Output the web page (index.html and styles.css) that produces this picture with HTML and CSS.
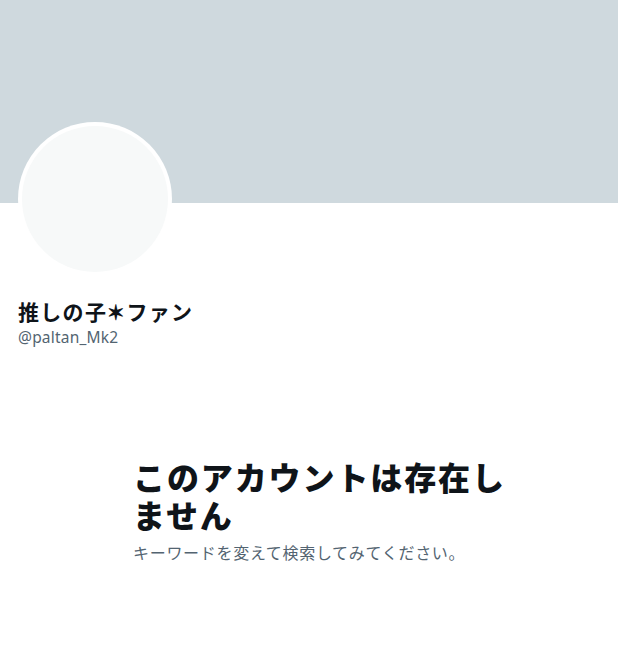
FILE: index.html
```html
<!DOCTYPE html>
<html lang="ja">
<head>
<meta charset="utf-8">
<link rel="stylesheet" href="styles.css">
</head>
<body>
<div class="page">
  <div class="banner"></div>
  <div class="profile">
    <div class="avatar"><div class="avatar-inner"></div></div>
    <div class="name">推しの子✶ファン</div>
    <div class="handle">@paltan_Mk2</div>
  </div>
  <div class="empty">
    <div class="empty-box">
      <div class="empty-title">このアカウントは存在しません</div>
      <div class="empty-sub">キーワードを変えて検索してみてください。</div>
    </div>
  </div>
</div>
</body>
</html>
```

FILE: styles.css
```css
html, body {
  margin: 0;
  padding: 0;
  background: #ffffff;
}
body {
  font-family: "Noto Sans", "Noto Sans CJK JP", sans-serif;
  color: #0f1419;
}
.page {
  width: 618px;
}
.banner {
  height: 203px;
  background: #cfd9de;
}
.profile {
  padding: 0 16px 0 18px;
}
.avatar {
  width: 154px;
  height: 154px;
  margin-top: -81px;
  border-radius: 50%;
  background: #ffffff;
  padding: 4px;
  box-sizing: border-box;
}
.avatar-inner {
  width: 100%;
  height: 100%;
  border-radius: 50%;
  background: #f7f9f9;
}
.name {
  margin-top: 24px;
  font-size: 21px;
  line-height: 24px;
  font-weight: 700;
  letter-spacing: 1.3px;
}
.handle {
  margin-top: 3px;
  font-size: 15.5px;
  line-height: 20px;
  letter-spacing: 0.2px;
  color: #536471;
}
.empty {
  padding: 112px 0 0 133px;
}
.empty-box {
  width: 380px;
}
.empty-title {
  font-size: 32px;
  line-height: 38px;
  font-weight: 800;
  letter-spacing: 1.9px;
}
.empty-sub {
  margin-top: 8px;
  font-size: 16px;
  line-height: 20px;
  letter-spacing: 0.7px;
  color: #536471;
}
```
